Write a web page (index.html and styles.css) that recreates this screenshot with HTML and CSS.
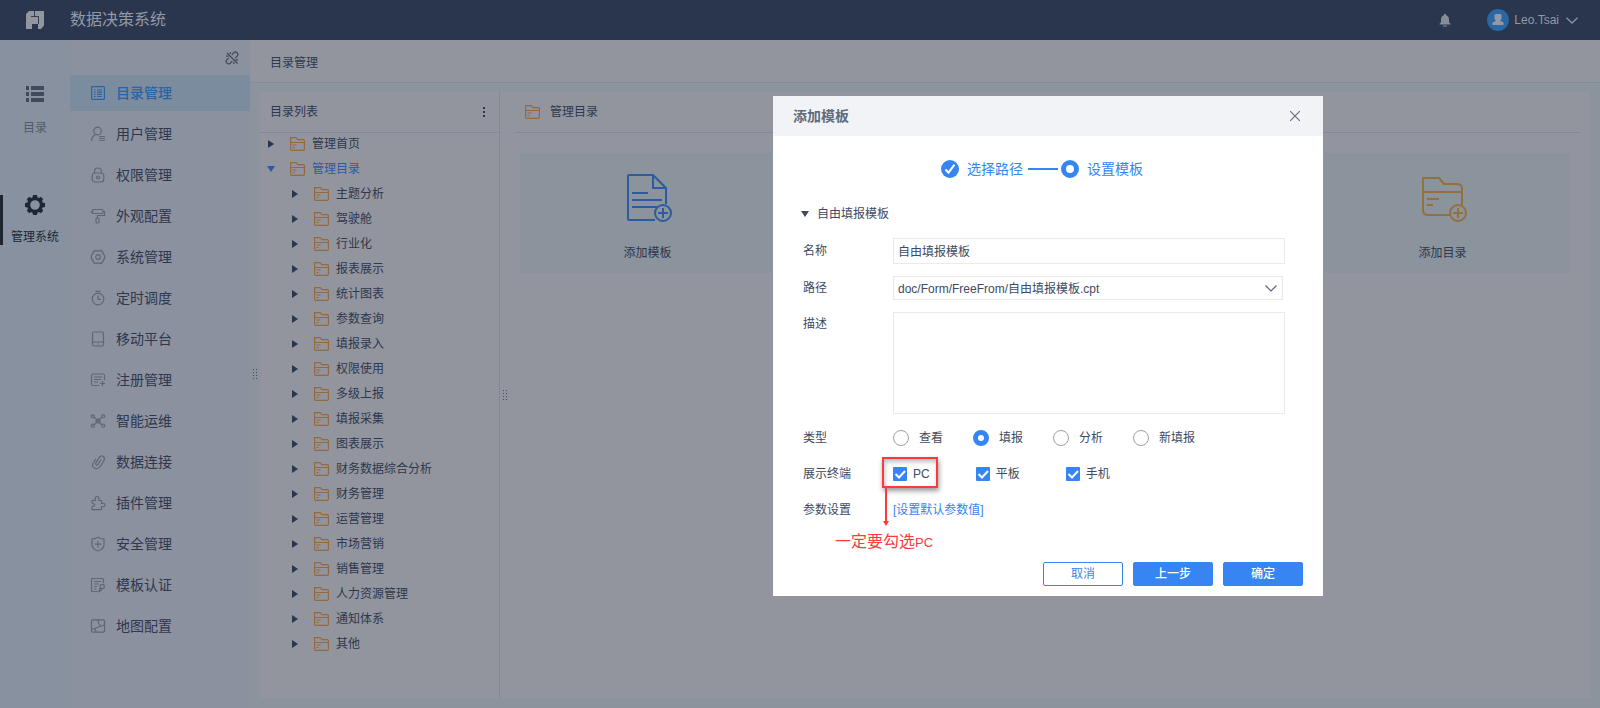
FILE: index.html
```html
<!DOCTYPE html>
<html lang="zh-CN">
<head>
<meta charset="utf-8">
<title>数据决策系统</title>
<link rel="stylesheet" href="styles.css">
</head>
<body>
<svg class="sprite" aria-hidden="true">
  <symbol id="folder" viewBox="0 0 15 14">
    <path d="M.6.6h5.6l1.8 2h5.4q1 0 1 1v8.6q0 1.2-1.2 1.2H1.8Q.6 13.400.6 12.200zM.6 5.500h13.800M2.500 8h4M2.500 10.500h2.200"/>
  </symbol>
</svg>
<div class="app">
  <header class="topbar">
    <div class="logo">
      <svg width="18" height="18" viewBox="0 0 18 18"><path fill="#92979f" d="M3 0h15v14.500L15 18h-3v-5H6v5H0V3z"/><path d="M5 5.500h7.500V13M8.500 0v5.500" fill="none" stroke="#2a354e" stroke-width=".9"/></svg>
    </div>
    <h1 class="brand">数据决策系统</h1>
    <svg class="bell" width="12" height="13" viewBox="0 0 12 13"><path fill="#868c98" d="M5 0h2v1.200q3 .8 3 4.200v2.800l1.500 1.600v.7H.5v-.7L2 8.200V5.400Q2 2 5 1.200zM4 11.500h4v1H4z"/></svg>
    <button class="user" type="button">
      <svg width="22" height="22" viewBox="0 0 22 22"><circle cx="11" cy="11" r="11" fill="#2b66a5"/><path fill="#949aa4" d="M8.500 5h5l1 1v4l-1.500 1.800 3.500 1.700V16h-11v-2.500L9 11.800 7.500 10V6z"/></svg>
      <span>Leo.Tsai</span>
      <svg width="12" height="7" viewBox="0 0 12 7" fill="none" stroke="#8d929e" stroke-width="1.400"><path d="M.5.8 6 6 11.500.8"/></svg>
    </button>
  </header>
  <div class="body">
    <nav class="rail">
      <button type="button" class="rail-item">
        <svg width="20" height="16" viewBox="0 0 20 16" fill="#41495a"><path d="M1 0h3v4H1zM6 0h13v4H6zM1 6h3v4H1zM6 6h13v4H6zM1 12h3v4H1zM6 12h13v4H6z"/></svg>
        <span>目录</span>
      </button>
      <button type="button" class="rail-item active">
        <svg width="20" height="20" viewBox="0 0 20 20"><g fill="#202734"><path fill-rule="evenodd" d="M10 2a8 8 0 1 1 0 16 8 8 0 0 1 0-16zm0 3.200a4.800 4.800 0 1 0 0 9.600 4.800 4.800 0 0 0 0-9.600z"/><path d="M8 0h4l.6 3H7.400zM8 20h4l.6-3H7.400zM0 8v4l3 .6V7.400zM20 8v4l-3 .6V7.400zM1.800 4.200l2.400-2.400 2.600 1.600-3.400 3.400zM18.200 4.200l-2.400-2.400-2.600 1.600 3.400 3.400zM1.800 15.800l2.400 2.400 2.600-1.600-3.400-3.400zM18.200 15.800l-2.400 2.400-2.600-1.600 3.400-3.400z"/></g></svg>
        <span>管理系统</span>
      </button>
    </nav>
    <nav class="sidebar">
      <div class="pin">
        <svg width="14" height="14" viewBox="0 0 14 14" fill="none" stroke="#3f4757" stroke-width="1.200"><path d="M6.800 3.800 8.800 1.700q1.700-1.500 3.300.1t.1 3.300l-2 2M7.200 10.200l-2 2q-1.700 1.500-3.300-.1t-.1-3.300l2-2M2 2l10.500 10.500M1 5.200h2.500M5.200 1v2M13 8.800h-2.500M8.800 13v-2"/></svg>
      </div>
      <ul class="menu">
        <li><a href="#" class="active"><svg viewBox="0 0 14 14"><rect x=".6" y=".6" width="12.800" height="12.800" rx=".8"/><path d="M3 4h1.500M6 4h5M3 6.200h1.500M6 6.200h5M3 8.400h1.500M6 8.400h5M3 10.500h1.500M6 10.500h5"/></svg>目录管理</a></li>
        <li><a href="#"><svg viewBox="0 0 14 14"><circle cx="6.500" cy="4" r="3.800"/><path d="M.7 14q0-5 4-6.500M8 9.500h6M8 11.500h6M8 13.500h6"/></svg>用户管理</a></li>
        <li><a href="#"><svg viewBox="0 0 14 14"><rect x="1.200" y="5" width="11.600" height="9" rx="3"/><path d="M3.500 5V3.200Q3.500 0 7 0t3.500 3.200V5"/><circle cx="7" cy="9.500" r="1.500"/></svg>权限管理</a></li>
        <li><a href="#"><svg viewBox="0 0 14 14"><rect x="1.500" y=".5" width="10.500" height="4" rx="1"/><path d="M1.500 2.500Q.2 2.500.5 4M12 2.500h1.500v4H6.500v2.500"/><rect x="5" y="9" width="3" height="5" rx="1.200"/></svg>外观配置</a></li>
        <li><a href="#"><svg viewBox="0 0 14 14"><path d="M4.800.3Q7 2 9.200.3q3 .8 3 3.700 2 1.200 1.300 3 .7 1.800-1.300 3 0 2.900-3 3.700-2.200-1.700-4.400 0-3-.8-3-3.700-2-1.200-1.300-3-.7-1.800 1.300-3 0-2.900 3-3.700z"/><circle cx="7" cy="7" r="2.300"/></svg>系统管理</a></li>
        <li><a href="#"><svg viewBox="0 0 14 14"><circle cx="7" cy="8" r="5.800"/><path d="M4.500.3h5M7 4.500V8.300h3"/></svg>定时调度</a></li>
        <li><a href="#"><svg viewBox="0 0 14 14"><rect x="1.500" y="0" width="11" height="14" rx="1.500"/><path d="M1.500 10h11M6.300 12h1.400"/></svg>移动平台</a></li>
        <li><a href="#"><svg viewBox="0 0 14 14"><path d="M8 12.500H1.700Q.5 12.500.5 11.300V2.200Q.5 1 1.700 1h10.600q1.200 0 1.200 1.200V7M3 4h8M3 6.500h7M3 9h4M9 10.500h5M11.500 8v5"/></svg>注册管理</a></li>
        <li><a href="#"><svg viewBox="0 0 14 14"><circle cx="1.800" cy="2.300" r="1.500"/><circle cx="12.200" cy="2.300" r="1.500"/><circle cx="1.800" cy="11.700" r="1.500"/><circle cx="12.200" cy="11.700" r="1.500"/><circle cx="7" cy="7" r="2"/><path d="M3 3.300l2.500 2M11 3.300l-2.500 2M3 10.700l2.500-2M11 10.700l-2.500-2M5 7h4M7 5v4"/></svg>智能运维</a></li>
        <li><a href="#"><svg viewBox="0 0 14 14"><path d="M10 4.500 7.200 9.300q-1 1.300-2 .6t-.3-2L8 2.700Q9.800 0 12 1.200t1 4.300L9.700 11Q7.500 14.500 4 13.400T2 8.500l2.800-4.700"/></svg>数据连接</a></li>
        <li><a href="#"><svg viewBox="0 0 14 14"><path d="M1 4.500h3.600q-1.200-4 1.400-4t1.700 4h2.800v3q3.500-.8 3.500 1.500t-3.500 1.600v3H1v-3q2.500-.3 2.500-1.800T1 7z" stroke-linejoin="round"/></svg>插件管理</a></li>
        <li><a href="#"><svg viewBox="0 0 14 14"><path d="M7 .2q2.500 1.600 6 2v5Q13 12 7 14 1 12 1 7.200v-5q3.500-.4 6-2zM7 4v6.500M3.700 7.200h6.600"/></svg>安全管理</a></li>
        <li><a href="#"><svg viewBox="0 0 14 14"><path d="M7 13.500H1.500Q.5 13.500.5 12.500v-11Q.5.500 1.500.500h10q1 0 1 1V5M3 3.500h7M3 6h5M3 8.500h3M3 11h2.500M9 10l-1 3.500 2-1 .5-1.500"/><circle cx="11.200" cy="8.500" r="2.200"/></svg>模板认证</a></li>
        <li><a href="#"><svg viewBox="0 0 14 14"><rect x=".5" y=".8" width="13" height="12.400" rx="1.200"/><path d="M7 .8q0 4 2.200 6M.5 10.500l13-4.500M4 9.500l1 3.700"/></svg>地图配置</a></li>
      </ul>
    </nav>
    <main class="main">
      <div class="crumb">目录管理</div>
      <div class="work">
        <div class="grip"></div>
        <section class="tree">
          <div class="tree-head"><h2>目录列表</h2>
            <button type="button" class="more" aria-label="更多"><i></i><i></i><i></i></button>
          </div>
          <ul class="nodes">
            <li class="node"><i class="arrow"></i><svg><use href="#folder"/></svg>管理首页</li>
            <li class="node open"><i class="arrow"></i><svg><use href="#folder"/></svg>管理目录</li>
            <li class="node child"><i class="arrow"></i><svg><use href="#folder"/></svg>主题分析</li>
            <li class="node child"><i class="arrow"></i><svg><use href="#folder"/></svg>驾驶舱</li>
            <li class="node child"><i class="arrow"></i><svg><use href="#folder"/></svg>行业化</li>
            <li class="node child"><i class="arrow"></i><svg><use href="#folder"/></svg>报表展示</li>
            <li class="node child"><i class="arrow"></i><svg><use href="#folder"/></svg>统计图表</li>
            <li class="node child"><i class="arrow"></i><svg><use href="#folder"/></svg>参数查询</li>
            <li class="node child"><i class="arrow"></i><svg><use href="#folder"/></svg>填报录入</li>
            <li class="node child"><i class="arrow"></i><svg><use href="#folder"/></svg>权限使用</li>
            <li class="node child"><i class="arrow"></i><svg><use href="#folder"/></svg>多级上报</li>
            <li class="node child"><i class="arrow"></i><svg><use href="#folder"/></svg>填报采集</li>
            <li class="node child"><i class="arrow"></i><svg><use href="#folder"/></svg>图表展示</li>
            <li class="node child"><i class="arrow"></i><svg><use href="#folder"/></svg>财务数据综合分析</li>
            <li class="node child"><i class="arrow"></i><svg><use href="#folder"/></svg>财务管理</li>
            <li class="node child"><i class="arrow"></i><svg><use href="#folder"/></svg>运营管理</li>
            <li class="node child"><i class="arrow"></i><svg><use href="#folder"/></svg>市场营销</li>
            <li class="node child"><i class="arrow"></i><svg><use href="#folder"/></svg>销售管理</li>
            <li class="node child"><i class="arrow"></i><svg><use href="#folder"/></svg>人力资源管理</li>
            <li class="node child"><i class="arrow"></i><svg><use href="#folder"/></svg>通知体系</li>
            <li class="node child"><i class="arrow"></i><svg><use href="#folder"/></svg>其他</li>
          </ul>
        </section>
        <section class="content">
          <div class="grip"></div>
          <div class="content-inner">
            <div class="content-head"><svg><use href="#folder"/></svg><h2>管理目录</h2></div>
            <div class="cards">
              <button type="button" class="card">
                <svg width="48" height="50" viewBox="0 0 48 50" fill="none" stroke="#2c5ba1" stroke-width="2"><path d="M42 31V15L29 2H5Q4 2 4 3v43q0 1 1 1h26M29 2v13h13M8 20h16M8 27h30M8 34h25"/><circle cx="39" cy="40" r="8"/><path d="M39 35v10M34 40h10"/></svg>
                <span>添加模板</span>
              </button>
              <button type="button" class="card last">
                <svg width="48" height="50" viewBox="0 0 48 50" fill="none" stroke="#927040" stroke-width="2"><path d="M43 32V16q0-5-5-5H25l-5-6H4v32q0 5 5 5h22M4 19h39M8 26h12M8 32h6"/><circle cx="39" cy="40" r="8"/><path d="M39 35v10M34 40h10"/></svg>
                <span>添加目录</span>
              </button>
            </div>
          </div>
        </section>
      </div>
    </main>
  </div>
</div>
<div class="backdrop">
  <form class="dialog" role="dialog" aria-labelledby="dialog-title">
    <div class="dialog-head">
      <h2 id="dialog-title">添加模板</h2>
      <button type="button" class="close" aria-label="关闭"><svg width="10" height="10" viewBox="0 0 10 10" fill="none" stroke="#6a707c" stroke-width="1.200"><path d="M0 0l10 10M10 0 0 10"/></svg></button>
    </div>
    <div class="dialog-body">
      <div class="steps">
        <svg width="18" height="18" viewBox="0 0 18 18"><circle cx="9" cy="9" r="9" fill="#3685f2"/><path d="M4.500 9.500l3 3.200 6-8" fill="none" stroke="#fff" stroke-width="2"/></svg>
        <span>选择路径</span>
        <i class="step-line"></i>
        <svg width="18" height="18" viewBox="0 0 18 18"><circle cx="9" cy="9" r="6.500" fill="none" stroke="#3685f2" stroke-width="5"/></svg>
        <span>设置模板</span>
      </div>
      <div class="group"><i class="arrow-down"></i>自由填报模板</div>
      <div class="row">
        <label for="name">名称</label>
        <input id="name" class="text" type="text" value="自由填报模板">
      </div>
      <div class="row">
        <label for="path">路径</label>
        <select id="path" class="select"><option>doc/Form/FreeFrom/自由填报模板.cpt</option></select>
      </div>
      <div class="row tall">
        <label for="desc">描述</label>
        <textarea id="desc" class="area"></textarea>
      </div>
      <div class="row" role="radiogroup" aria-labelledby="type-label">
        <span class="caption" id="type-label">类型</span>
        <div class="radios">
          <label><input type="radio" name="type">查看</label>
          <label><input type="radio" name="type" checked>填报</label>
          <label><input type="radio" name="type">分析</label>
          <label><input type="radio" name="type">新填报</label>
        </div>
      </div>
      <div class="row" role="group" aria-labelledby="term-label">
        <span class="caption" id="term-label">展示终端</span>
        <div class="checks">
          <div class="marked">
            <label><input type="checkbox" checked>PC</label>
            <span class="mark"></span>
            <svg class="mark-arrow" width="6" height="38" viewBox="0 0 6 38"><path d="M2 0h2v33h2l-3 5-3-5h2z" fill="#f93b3b"/></svg>
            <span class="note">一定要勾选<small>PC</small></span>
          </div>
          <label><input type="checkbox" checked>平板</label>
          <label><input type="checkbox" checked>手机</label>
        </div>
      </div>
      <div class="row">
        <span class="caption">参数设置</span>
        <a href="#" class="link">[设置默认参数值]</a>
      </div>
    </div>
    <div class="dialog-foot">
      <button type="button" class="btn ghost">取消</button>
      <button type="button" class="btn">上一步</button>
      <button type="submit" class="btn">确定</button>
    </div>
  </form>
</div>
</body>
</html>
```
FILE: styles.css
```css
* { box-sizing: border-box; }
body {
  margin: 0;
  font: 12px/24px "Liberation Sans", "Noto Sans CJK SC", sans-serif;
  color: #2d374e;
}
button, input, select, textarea { font: inherit; color: inherit; }
button { background: none; border: 0; padding: 0; }
h1, h2 { margin: 0; font: inherit; }
ul { list-style: none; margin: 0; padding: 0; }
a { color: inherit; text-decoration: none; }
svg { flex: none; display: block; }
.sprite { position: absolute; width: 0; height: 0; }

.app { min-height: 100vh; display: flex; flex-direction: column; }
.topbar {
  height: 40px;
  display: flex;
  align-items: center;
  background: #2a354e;
  color: #949aa5;
  padding-right: 22px;
}
.logo { width: 70px; display: flex; justify-content: center; }
.brand { font-size: 16px; flex: 1; }
.bell { margin-right: 36px; }
.user { display: flex; align-items: center; }
.user span { margin: 0 7px 0 5px; }
.body { flex: 1; display: flex; }

.rail { width: 70px; background: #87919f; padding-top: 46px; }
.rail-item {
  width: 100%;
  height: 50px;
  display: flex;
  flex-direction: column;
  align-items: center;
  justify-content: space-between;
  margin-bottom: 59px;
  color: #525a69;
}
.rail-item span { line-height: 16px; }
.rail-item.active { border-left: 3px solid #1f2530; padding-right: 3px; color: #202734; }

.sidebar { width: 180px; background: #8c919f; }
.pin { height: 35px; display: flex; align-items: center; justify-content: flex-end; padding-right: 11px; }
.menu { display: flex; flex-direction: column; gap: 5px; }
.menu a {
  height: 36px;
  display: flex;
  align-items: center;
  gap: 11px;
  padding-left: 21px;
  font-size: 14px;
}
.menu svg { width: 14px; height: 14px; overflow: visible; fill: none; stroke: #5f6676; stroke-width: 1.2px; }
.menu .active { background: #7b8c9f; color: #2c62a6; font-weight: 500; }
.menu .active svg { stroke: #2c62a6; }

.main { flex: 1; display: flex; flex-direction: column; background: #8b939d; }
.crumb {
  height: 43px;
  display: flex;
  align-items: center;
  padding: 3px 0 0 20px;
  background: #92959e;
  border-bottom: 1px solid #858a95;
}
.work { flex: 1; display: flex; padding: 9px 10px 10px 0; }
.grip {
  width: 6px;
  height: 12px;
  margin: 0 3px 0 2px;
  align-self: center;
  background: radial-gradient(circle, #414a5d 1px, transparent 1px) 0 0 / 3px 3px;
}
.work > .grip { margin: 0 2px 42px 2px; }
.tree { width: 240px; background: #92959e; border-right: 1px solid #838895; }
.tree-head {
  height: 41px;
  display: flex;
  align-items: center;
  justify-content: space-between;
  padding: 0 14px 0 10px;
  border-bottom: 1px solid #838895;
}
.nodes { margin-top: -1px; }
.more { display: flex; flex-direction: column; gap: 2px; }
.more i { width: 2px; height: 2px; background: #2d374e; }
.node { height: 25px; display: flex; align-items: center; padding: 0 0 1px 8px; }
.node.child { padding-left: 32px; }
.node svg, .content-head svg { width: 15px; height: 14px; fill: none; stroke: #94693f; stroke-width: 1.2px; }
.node svg { margin-right: 7px; }
.arrow {
  width: 6px;
  margin-right: 16px;
  border: solid transparent;
  border-width: 4px 0 4px 6px;
  border-left-color: #2a3550;
}
.node.open { color: #2c5ba1; }
.open .arrow { width: 8px; margin: 0 15px 0 -1px; border-width: 6px 4px 0; border-color: #2c5ba1 transparent transparent; }

.content { flex: 1; display: flex; background: #92959e; }
.content-inner { flex: 1; margin: 0 10px 0 4px; }
.content-head {
  height: 41px;
  display: flex;
  align-items: center;
  gap: 10px;
  padding-left: 10px;
  border-bottom: 1px solid #838895;
}
.cards { display: grid; grid-template-columns: repeat(4, 1fr); gap: 10px; padding: 20px 10px 0 5px; }
.card {
  height: 120px;
  display: flex;
  flex-direction: column;
  align-items: center;
  justify-content: space-between;
  padding: 20px 0 8px;
  background: #8b939d;
}
.card.last { grid-column: 4; }

.backdrop { position: fixed; inset: 0; display: flex; align-items: flex-start; justify-content: center; padding: 96px 0 0 496px; }
.dialog { width: 550px; background: #fff; color: #3d4a63; }
.dialog-head {
  height: 40px;
  display: flex;
  align-items: center;
  justify-content: space-between;
  padding: 0 23px 0 20px;
  background: #f2f3f7;
  color: #616b7c;
  font-size: 14px;
  font-weight: 700;
}
.dialog-body { display: flex; flex-direction: column; gap: 12px; padding: 21px 38px 0 30px; }
.steps {
  display: flex;
  align-items: center;
  justify-content: center;
  gap: 8px;
  margin-bottom: 9px;
  padding-right: 4px;
  color: #3685f2;
  font-size: 14px;
}
.step-line { width: 30px; height: 2px; margin: 0 -5px 0 -3px; background: #3685f2; }
.group { display: flex; align-items: center; gap: 8px; }
.arrow-down { margin-left: -2px; border: solid transparent; border-width: 6px 4px 0; border-top-color: #3d4a63; }
.row { display: grid; grid-template-columns: 90px 1fr; align-items: center; }
.row.tall { align-items: start; }
.text, .select, .area { width: 100%; border: 1px solid #e8eaed; border-radius: 0; background: #fff; outline: 0; }
.text { height: 26px; padding: 0 4px 2px; }
.select {
  width: calc(100% - 2px);
  height: 24px;
  padding: 0 4px;
  appearance: none;
  background: url("data:image/svg+xml,%3Csvg xmlns='http://www.w3.org/2000/svg' width='12' height='7' fill='none' stroke='%235a6478' stroke-width='1.2'%3E%3Cpath d='M.5.5 6 6 11.5.5'/%3E%3C/svg%3E") no-repeat right 5px center;
}
.area { display: block; height: 102px; resize: none; }
.radios { display: grid; grid-template-columns: repeat(4, 80px); }
.radios label { display: flex; align-items: center; gap: 10px; }
.radios input {
  appearance: none;
  width: 16px;
  height: 16px;
  margin: 0;
  border: 1px solid #9ba1ac;
  border-radius: 50%;
}
.radios input:checked { border: 5px solid #3685f2; }
.checks { display: flex; gap: 46px; }
.checks label { display: flex; align-items: center; gap: 6px; }
.checks input {
  appearance: none;
  width: 14px;
  height: 14px;
  margin: 0;
  border-radius: 1px;
  background: #3685f2 url("data:image/svg+xml,%3Csvg xmlns='http://www.w3.org/2000/svg' width='14' height='14' fill='none' stroke='white' stroke-width='2'%3E%3Cpath d='M2.500 7l3.500 3.500 6-6.500'/%3E%3C/svg%3E");
}
.marked { position: relative; }
.mark {
  position: absolute;
  left: -11px;
  top: -5px;
  width: 56px;
  height: 31px;
  border: 2px solid #f93b3b;
  box-shadow: 1px 3px 5px rgba(0, 0, 0, .4), inset 1px 3px 4px rgba(0, 0, 0, .25);
  pointer-events: none;
}
.mark-arrow { position: absolute; left: -10px; top: 26px; }
.note { position: absolute; left: -58px; top: 68px; white-space: nowrap; font-size: 16px; color: #f93b3b; }
.note small { font-size: 13px; }
.link { color: #3685f2; }
.dialog-foot { display: flex; justify-content: flex-end; gap: 10px; padding: 40px 20px 10px; }
.btn { width: 80px; height: 24px; border: 1px solid #3685f2; border-radius: 2px; background: #3685f2; color: #fff; font-weight: 500; line-height: 22px; }
.btn.ghost { background: #fff; color: #3685f2; font-weight: 400; }
```
